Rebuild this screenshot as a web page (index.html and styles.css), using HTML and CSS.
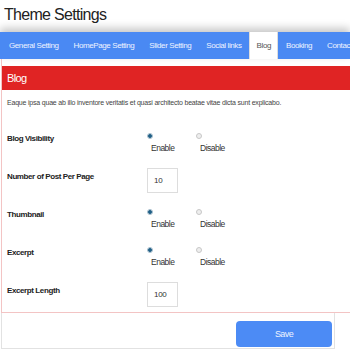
FILE: index.html
```html
<!DOCTYPE html>
<html lang="en">
<head>
    <meta charset="UTF-8">
    <meta name="viewport" content="width=device-width, initial-scale=1.0">
    <title>Theme Settings</title>
    <link rel="stylesheet" href="styles.css">
</head>
<body>
    <h1 class="page-title">Theme Settings</h1>

    <div class="tabs">
        <a class="tab" href="#">General Setting</a>
        <a class="tab" href="#">HomePage Setting</a>
        <a class="tab" href="#">Slider Setting</a>
        <a class="tab" href="#">Social links</a>
        <a class="tab active" href="#">Blog</a>
        <a class="tab" href="#">Booking</a>
        <a class="tab" href="#">Contact</a>
    </div>

    <div class="panel">
        <div class="panel-heading">Blog</div>
        <div class="panel-body">
            <p class="intro">Eaque ipsa quae ab illo inventore veritatis et quasi architecto beatae vitae dicta sunt explicabo.</p>

            <div class="form-row">
                <div class="field-label">Blog Visibility</div>
                <div class="radio-group">
                    <label class="radio-option"><input type="radio" name="visibility" checked><span>Enable</span></label>
                    <label class="radio-option"><input type="radio" name="visibility"><span>Disable</span></label>
                </div>
            </div>

            <div class="form-row">
                <div class="field-label">Number of Post Per Page</div>
                <input class="num-input" type="text" value="10">
            </div>

            <div class="form-row">
                <div class="field-label">Thumbnail</div>
                <div class="radio-group">
                    <label class="radio-option"><input type="radio" name="thumbnail" checked><span>Enable</span></label>
                    <label class="radio-option"><input type="radio" name="thumbnail"><span>Disable</span></label>
                </div>
            </div>

            <div class="form-row">
                <div class="field-label">Excerpt</div>
                <div class="radio-group">
                    <label class="radio-option"><input type="radio" name="excerpt" checked><span>Enable</span></label>
                    <label class="radio-option"><input type="radio" name="excerpt"><span>Disable</span></label>
                </div>
            </div>

            <div class="form-row">
                <div class="field-label">Excerpt Length</div>
                <input class="num-input" type="text" value="100">
            </div>
        </div>
    </div>

    <div class="form-footer">
        <button class="btn-save" type="button">Save</button>
    </div>
</body>
</html>
```

FILE: styles.css
```css
html, body {
    height: 350px;
    overflow: hidden;
}
body {
    margin: 0;
    font-family: "Liberation Sans", Arial, sans-serif;
    background-color: #fff;
    color: #222;
}
.page-title {
    margin: 0;
    height: 32px;
    line-height: 30px;
    padding-left: 4px;
    font-size: 16px;
    font-weight: normal;
    letter-spacing: -0.7px;
    color: #222;
}
.tabs {
    display: flex;
    height: 27px;
    background-color: #4a89f3;
    box-shadow: 0 -4px 8px rgba(0, 0, 0, 0.22);
    white-space: nowrap;
    overflow: hidden;
}
.tab {
    display: block;
    padding: 0 7.5px;
    line-height: 27px;
    font-size: 8px;
    letter-spacing: -0.4px;
    color: #eef3ff;
    text-decoration: none;
}
.tab:first-child {
    padding-left: 9px;
}
.tab.active {
    background-color: #fff;
    color: #555;
    margin-top: -1px;
    height: 28px;
    border: 1px solid #ddd;
    border-bottom: none;
    padding: 0 6.5px;
    line-height: 28px;
}
.panel {
    margin-left: 1px;
    padding-top: 7px;
    border-left: 1px solid #f3c4c4;
    border-bottom: 1px solid #f3c4c4;
}
.panel-heading {
    height: 24px;
    line-height: 24px;
    padding-left: 5px;
    background-color: #e02424;
    color: #fff;
    font-size: 11px;
    letter-spacing: -0.6px;
}
.panel-body {
    padding: 7px 0 5px 5px;
}
.intro {
    margin: 0 0 21px;
    line-height: 12px;
    font-size: 7px;
    letter-spacing: -0.2px;
    color: #444;
}
.form-row {
    display: flex;
    height: 25px;
    margin-bottom: 13px;
}
.form-row:last-child {
    margin-bottom: 0;
}
.field-label {
    width: 140px;
    padding-top: 4px;
    line-height: 10px;
    font-size: 8px;
    font-weight: bold;
    letter-spacing: -0.4px;
    color: #222;
}
.radio-group {
    display: flex;
}
.radio-option {
    display: flex;
    flex-direction: column;
    width: 49px;
}
.radio-option input {
    appearance: none;
    -webkit-appearance: none;
    width: 6px;
    height: 6px;
    margin: 3px 0 0 0;
    border-radius: 50%;
    border: 1px solid #c8c8c8;
    background-color: #eee;
}
.radio-option input:checked {
    border-color: #9fb8c8;
    background: radial-gradient(circle, #1f5f86 0, #1f5f86 1.6px, #dce8ef 2.4px);
}
.radio-option span {
    margin: 4px 0 0 4px;
    line-height: 11px;
    font-size: 8.5px;
    letter-spacing: -0.5px;
    color: #333;
}
.num-input {
    box-sizing: border-box;
    width: 31px;
    height: 25px;
    margin: 0;
    padding: 0 0 0 6px;
    border: 1px solid #ddd;
    font-family: inherit;
    font-size: 8px;
    letter-spacing: -0.3px;
    color: #333;
    outline: none;
}
.form-footer {
    box-sizing: border-box;
    width: 334px;
    height: 36px;
    margin-left: 1px;
    padding: 8px 2px 0 0;
    border: 1px solid #e2e2e2;
    border-top: none;
    text-align: right;
}
.btn-save {
    width: 96px;
    height: 26px;
    border: none;
    border-radius: 4px;
    background-color: #4c8bf5;
    color: #eef3ff;
    font-family: inherit;
    font-size: 9px;
    letter-spacing: -0.6px;
}
```
